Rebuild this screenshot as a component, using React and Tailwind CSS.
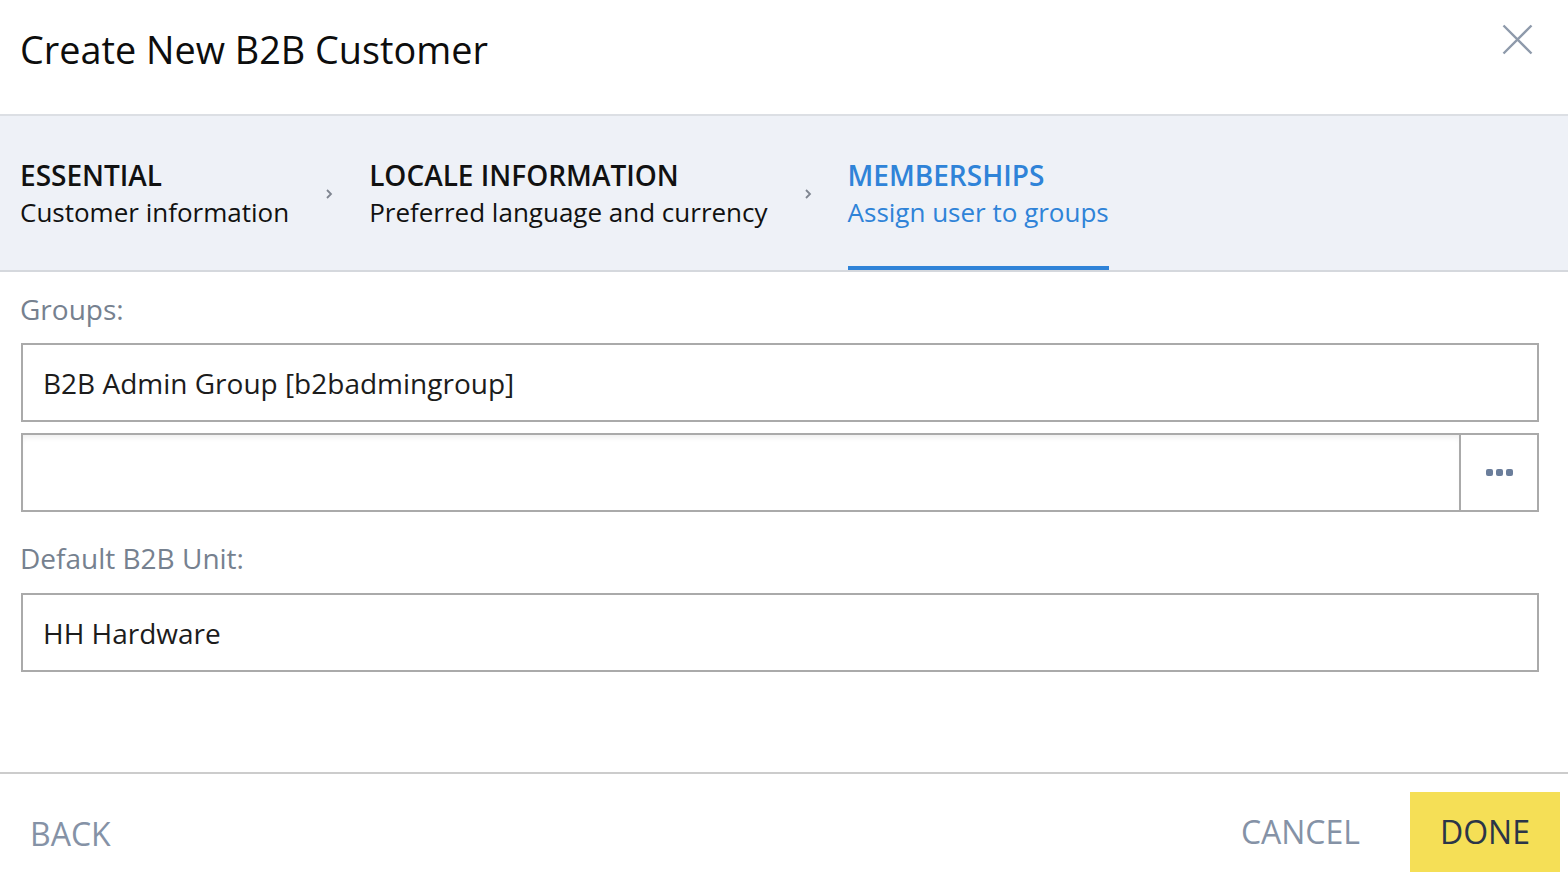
import React from "react";

function Step({ title, subtitle, active }) {
  return (
    <div
      className={
        "flex flex-col pt-[41px] " +
        (active ? "border-b-4 border-[#2f83d8] text-[#2f83d8]" : "text-[#111]")
      }
    >
      <div className="text-[28px] leading-[37px] font-semibold">{title}</div>
      <div className="text-[26px] leading-[37px]">{subtitle}</div>
    </div>
  );
}

function Chevron() {
  return (
    <div className="w-[80px] flex justify-center pt-[72px]">
      <svg width="8" height="12" viewBox="0 0 8 12">
        <path d="M2 2 L6 6 L2 10" fill="none" stroke="#7f8590" strokeWidth="1.8" />
      </svg>
    </div>
  );
}

export default function App() {
  return (
    <div
      className="w-[1568px] h-[884px] bg-white flex flex-col overflow-hidden"
      style={{ fontFamily: '"Open Sans", "Noto Sans", sans-serif' }}
    >
      {/* Header */}
      <div className="h-[116px] shrink-0 border-b-2 border-[#dcdfe4] flex items-start justify-between pl-[20px] pr-[35px]">
        <h1 className="pt-[26px] text-[37.8px] leading-[48px] text-[#0d0d0d]">
          Create New B2B Customer
        </h1>
        <svg className="mt-[24px]" width="31" height="31" viewBox="0 0 31 31">
          <path d="M1.5 1.5 L29.5 29.5 M29.5 1.5 L1.5 29.5" stroke="#8e9aab" strokeWidth="2.4" fill="none" />
        </svg>
      </div>

      {/* Steps */}
      <div className="h-[156px] shrink-0 bg-[#eef1f7] border-b-2 border-[#d5d8dd] flex items-stretch pl-[20px]">
        <Step title="ESSENTIAL" subtitle="Customer information" />
        <Chevron />
        <Step title="LOCALE INFORMATION" subtitle="Preferred language and currency" />
        <Chevron />
        <Step title="MEMBERSHIPS" subtitle="Assign user to groups" active />
      </div>

      {/* Body */}
      <div className="flex-1 flex flex-col pl-[21px] pr-[29px]">
        <div className="pt-[18px] text-[28px] leading-[38px] text-[#76818f] -ml-[1px]">Groups:</div>
        <div className="mt-[15px] h-[79px] border-2 border-[#aaaaaa] flex items-center px-[20px] text-[28px] text-[#1c1c1c]">
          B2B Admin Group [b2badmingroup]
        </div>
        <div className="mt-[11px] h-[79px] border-2 border-[#aaaaaa] flex">
          <div className="flex-1 shadow-[inset_0_5px_6px_-3px_rgba(0,0,0,0.08)]"></div>
          <div className="w-[78px] border-l-2 border-[#aaaaaa] flex items-center justify-center gap-[3px]">
            <span className="w-[7px] h-[7px] rounded-[2px] bg-[#6b7e9b]"></span>
            <span className="w-[7px] h-[7px] rounded-[2px] bg-[#6b7e9b]"></span>
            <span className="w-[7px] h-[7px] rounded-[2px] bg-[#6b7e9b]"></span>
          </div>
        </div>
        <div className="mt-[27px] text-[28px] leading-[38px] text-[#76818f] -ml-[1px]">Default B2B Unit:</div>
        <div className="mt-[16px] h-[79px] border-2 border-[#aaaaaa] flex items-center px-[20px] text-[28px] text-[#1c1c1c]">
          HH Hardware
        </div>
      </div>

      {/* Footer */}
      <div className="h-[112px] shrink-0 border-t-2 border-[#cccccc] flex items-start justify-between pl-[30px] pr-[8px] pt-[18px]">
        <button className="mt-[22px] text-[32px] leading-[40px] text-[#8592a6]">BACK</button>
        <div className="flex items-start">
          <button className="mt-[20px] mr-[50px] text-[32px] leading-[40px] text-[#8592a6]">CANCEL</button>
          <button className="w-[150px] h-[80px] bg-[#f5df56] text-[32px] leading-[40px] text-[#2b3548]">
            DONE
          </button>
        </div>
      </div>
    </div>
  );
}
